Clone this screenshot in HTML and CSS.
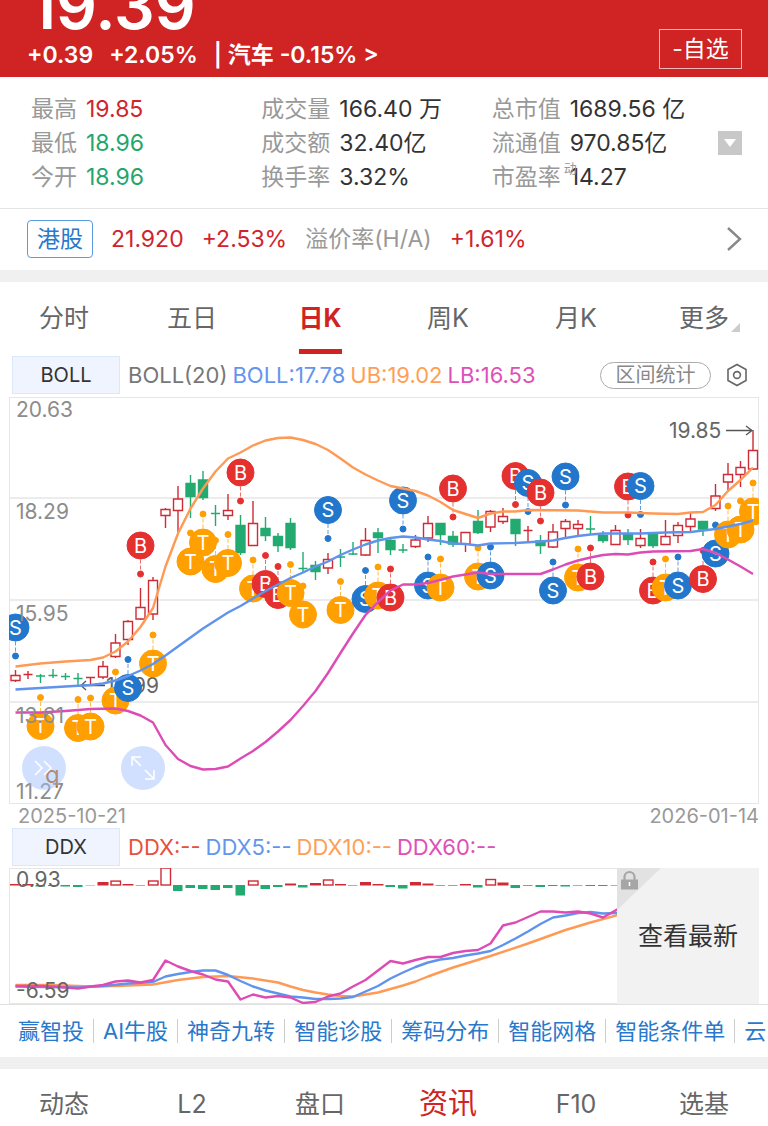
FILE: index.html
```html
<!DOCTYPE html>
<html lang="zh-CN">

<head>
    <meta charset="UTF-8">
    <meta name="viewport" content="width=device-width, initial-scale=1.0">
    <title>日K</title>
    <link rel="stylesheet" href="styles.css">
</head>

<body>
    <header class="header">
        <div>
            <div class="price">19.39</div>
            <div class="change">
                <span>+0.39</span>
                <span>+2.05%</span>
                <a href="#">| 汽车 -0.15% &gt;</a>
            </div>
        </div>
        <button class="watch">-自选</button>
    </header>

    <section class="quote">
        <div class="quote-grid">
            <div class="cell"><span>最高</span><b class="red">19.85</b></div>
            <div class="cell"><span>成交量</span><b>166.40 万</b></div>
            <div class="cell"><span>总市值</span><b>1689.56 亿</b></div>
            <div class="cell"><span>最低</span><b class="green">18.96</b></div>
            <div class="cell"><span>成交额</span><b>32.40亿</b></div>
            <div class="cell"><span>流通值</span><b>970.85亿</b></div>
            <div class="cell"><span>今开</span><b class="green">18.96</b></div>
            <div class="cell"><span>换手率</span><b>3.32%</b></div>
            <div class="cell"><span class="pe">市盈率<i>动</i></span><b>14.27</b></div>
        </div>
        <button class="expand" aria-label="展开">
            <svg width="12" height="8" viewBox="0 0 12 8"><path d="M0 0h12L6 8z" fill="#fff" /></svg>
        </button>
    </section>

    <a class="hk" href="#">
        <span class="hk-tag">港股</span>
        <span class="red">21.920</span>
        <span class="red">+2.53%</span>
        <span class="hk-label">溢价率(H/A)</span>
        <span class="red">+1.61%</span>
        <svg class="hk-arrow" width="16" height="26" viewBox="0 0 16 26"><path d="M2 2l12 11L2 24" fill="none" stroke="#888" stroke-width="2.4" /></svg>
    </a>

    <nav class="tabs">
        <button>分时</button>
        <button>五日</button>
        <button class="active">日K</button>
        <button>周K</button>
        <button>月K</button>
        <button class="more">更多</button>
    </nav>

    <div class="indicator">
        <button class="ind-name">BOLL</button>
        <div class="ind-values">
            <span>BOLL(20)</span>
            <span class="c-blue">BOLL:17.78</span>
            <span class="c-orange">UB:19.02</span>
            <span class="c-pink">LB:16.53</span>
        </div>
        <button class="range">区间统计</button>
        <button class="setting" aria-label="设置">
            <svg width="22" height="24" viewBox="0 0 22 24" fill="none" stroke="#666" stroke-width="1.6">
                <path d="M11 1.5L20 6.5v11L11 22.5L2 17.5v-11z" />
                <circle cx="11" cy="12" r="3.4" />
            </svg>
        </button>
    </div>

    <div class="chart">
        <svg id="kline" viewBox="9 397 750 407"></svg>
        <button class="tool" aria-label="快进">
            <svg width="22" height="22" viewBox="0 0 22 22"><path d="M2 4l7 7-7 7M11 4l7 7-7 7" /></svg>
        </button>
        <button class="tool full" aria-label="全屏">
            <svg width="26" height="26" viewBox="0 0 26 26"><path d="M2 11V2h9M2 2l9 9M24 15v9h-9M24 24l-9-9" /></svg>
        </button>
    </div>
    <div class="dates"><span>2025-10-21</span><span>2026-01-14</span></div>

    <div class="indicator">
        <button class="ind-name">DDX</button>
        <div class="ind-values">
            <span class="c-red">DDX:--</span>
            <span class="c-blue">DDX5:--</span>
            <span class="c-orange">DDX10:--</span>
            <span class="c-pink">DDX60:--</span>
        </div>
    </div>

    <div class="ddx">
        <svg id="ddx" viewBox="9 868 608 136"></svg>
        <button class="latest">
            <svg class="lock" width="44" height="42" viewBox="0 0 44 42">
                <path d="M0 0h44L0 42z" fill="#e2e2e2" />
                <path d="M7.500 12V9a5 5 0 0 1 10 0v3" fill="none" stroke="#a6a6a6" stroke-width="2.200" />
                <path d="M4 11.500h17v10H4z" fill="#a6a6a6" />
                <path d="M12.500 14v4" stroke="#fff" stroke-width="1.500" />
            </svg>
            查看最新
        </button>
    </div>

    <nav class="links">
        <a href="#">赢智投</a>
        <a href="#">AI牛股</a>
        <a href="#">神奇九转</a>
        <a href="#">智能诊股</a>
        <a href="#">筹码分布</a>
        <a href="#">智能网格</a>
        <a href="#">智能条件单</a>
        <a href="#">云</a>
    </nav>

    <nav class="bottom">
        <button>动态</button>
        <button>L2</button>
        <button>盘口</button>
        <button class="active">资讯</button>
        <button>F10</button>
        <button>选基</button>
    </nav>

    <script src="script.js"></script>
</body>

</html>
```

FILE: styles.css
```css
* {
    box-sizing: border-box;
}

body {
    margin: 0;
    background: #fff;
    color: #333;
    font-family: Inter, "Noto Sans CJK SC", sans-serif;
    font-size: 23px;
    line-height: 34px;
}

button {
    padding: 0;
    border: 0;
    background: none;
    color: inherit;
    font: inherit;
    cursor: pointer;
}

a {
    color: inherit;
    text-decoration: none;
}

svg {
    display: block;
}

.red {
    color: #d0242c;
}

.green {
    color: #22a66b;
}

.c-red {
    color: #e8503a;
}

.c-blue {
    color: #6495ed;
}

.c-orange {
    color: #ff9f55;
}

.c-pink {
    color: #e04fb8;
}

.header {
    display: flex;
    justify-content: space-between;
    align-items: flex-end;
    height: 77px;
    padding: 0 26px 6px 27px;
    overflow: hidden;
    background: #d02324;
    color: #fff;
}

.price {
    padding-left: 2px;
    font-size: 64px;
    font-weight: 600;
    line-height: 66px;
}

.change {
    display: flex;
    gap: 16px;
    font-weight: 600;
    line-height: 32px;
}

.watch {
    width: 83px;
    height: 40px;
    margin-bottom: 2px;
    border: 1px solid #f3b5b5;
}

.quote {
    display: flex;
    align-items: center;
    padding: 15px 26px 14px 31px;
    border-bottom: 1px solid #e4e4e4;
}

.quote-grid {
    display: grid;
    flex: 1;
    grid-template-columns: repeat(3, 1fr);
}

.cell {
    display: flex;
    gap: 9px;
    white-space: nowrap;
}

.cell span {
    color: #999;
}

.cell b {
    font-weight: 400;
}

.pe {
    position: relative;
}

.pe i {
    position: absolute;
    top: -9px;
    right: -16px;
    font-size: 13px;
    font-style: normal;
}

.expand {
    display: flex;
    align-items: center;
    justify-content: center;
    width: 24px;
    height: 24px;
    margin-left: -4px;
    background: #c8c8c8;
}

.hk {
    display: flex;
    align-items: center;
    gap: 18px;
    height: 73px;
    padding: 0 26px 2px 27px;
    border-bottom: 12px solid #f0f0f0;
}

.hk-tag {
    padding: 0 9px;
    border: 1px solid #5b9be0;
    border-radius: 4px;
    color: #2878cc;
    line-height: 36px;
}

.hk-label {
    color: #999;
}

.hk-arrow {
    margin-left: auto;
}

.tabs,
.bottom {
    display: grid;
    grid-template-columns: repeat(6, 1fr);
    color: #666;
    font-size: 25px;
}

.tabs button {
    position: relative;
    height: 74px;
    padding-bottom: 2px;
}

.tabs .active {
    color: #d02324;
    font-weight: 700;
}

.tabs .active::after {
    content: "";
    position: absolute;
    bottom: 2px;
    left: calc(50% - 21px);
    width: 43px;
    height: 5px;
    background: #d02324;
}

.more::after {
    content: "";
    position: absolute;
    right: 28px;
    bottom: 24px;
    border-bottom: 9px solid #ccc;
    border-left: 9px solid transparent;
}

.indicator {
    display: flex;
    align-items: center;
    height: 38px;
    padding: 0 20px 0 12px;
    font-size: 20px;
}

.ind-name {
    width: 108px;
    height: 38px;
    border: 1px solid #dbe7fb;
    background: #eff4fe;
}

.ind-values {
    display: flex;
    flex: 1;
    gap: 5px;
    margin-left: 8px;
    color: #777;
    font-size: 22px;
}

.range {
    width: 111px;
    height: 27px;
    border: 1px solid #aaa;
    border-radius: 14px;
    color: #888;
    line-height: 24px;
}

.setting {
    margin-left: 15px;
}

.chart {
    position: relative;
    margin: 3px 9px 0;
}

.chart > svg,
.ddx > svg {
    width: 100%;
}

.tool {
    position: absolute;
    bottom: 14px;
    left: 13px;
    display: flex;
    align-items: center;
    justify-content: center;
    width: 44px;
    height: 44px;
    border-radius: 50%;
    background: rgba(160, 191, 254, 0.48);
}

.tool path {
    fill: none;
    stroke: #fff;
    stroke-width: 1.5;
}

.full {
    left: 112px;
}

.dates {
    display: flex;
    justify-content: space-between;
    padding: 0 9px 0 18px;
    color: #999;
    font-size: 20px;
    line-height: 24px;
}

.ddx {
    display: grid;
    grid-template-columns: 608fr 142fr;
    margin: 2px 9px 0;
}

.latest {
    position: relative;
    background: #f2f2f2;
    font-size: 25px;
}

.lock {
    position: absolute;
    top: 0;
    left: 0;
}

.links {
    display: flex;
    align-items: center;
    height: 65px;
    padding: 0 9px;
    border-top: 1px solid #e0e0e0;
    border-bottom: 12px solid #f0f0f0;
    overflow: hidden;
    color: #2878cc;
    font-size: 22px;
    white-space: nowrap;
}

.links a {
    padding: 0 9px;
    line-height: 24px;
}

.links a + a {
    border-left: 1px solid #ccc;
}

.bottom {
    height: 57px;
    padding-top: 12px;
}

.bottom .active {
    color: #d02324;
    font-size: 29px;
}

/* chart */
.grid {
    stroke: #e6e6e6;
}

.up {
    fill: none;
    stroke: #cf2b36;
    stroke-width: 1.4;
}

.up.solid {
    fill: #cf2b36;
    stroke: none;
}

.down {
    fill: #22aa70;
    stroke: #22aa70;
    stroke-width: 1.4;
}

.down.solid {
    stroke: none;
}

.line {
    fill: none;
    stroke-width: 2.4;
    stroke-linejoin: round;
}

.ub {
    stroke: #ff9a55;
}

.mid {
    stroke: #5f93ec;
}

.lb {
    stroke: #dd4cb4;
}

.B {
    fill: #e53030;
    stroke: #e53030;
}

.S {
    fill: #2277cc;
    stroke: #2277cc;
}

.T {
    fill: #ff9f00;
    stroke: #ff9f00;
}

.stem {
    stroke-dasharray: 4 2;
    opacity: 0.7;
}

.letter {
    fill: #fff;
    font-size: 20px;
    text-anchor: middle;
}

.axis {
    fill: #8c8c8c;
    font-size: 21px;
}

.axis.dark {
    fill: #666;
}

.arrow {
    fill: none;
    stroke: #555;
    stroke-width: 1.3;
}

.q {
    fill: #b86200;
    font-size: 24px;
}
```

FILE: script.js
```js
const STEP = 12.5;
const px = (i) => 15.5 + i * STEP;

// direction, high, body top, body bottom, low
const candles = [
    ['u', 670, 675.5, 680.5, 682], ['u', 671, 674.5, 674.5, 679], ['d', 674, 676, 676, 683], ['d', 669, 675.5, 675.5, 678],
    ['d', 673, 676.5, 676.5, 680], ['d', 673, 678.5, 678.5, 685], ['u', 677, 677.5, 677.5, 684], ['u', 661, 666.5, 677, 679],
    ['u', 634, 643, 656.5, 658], ['u', 620, 621.5, 639.5, 645], ['u', 588, 607.5, 619, 620], ['u', 577, 580.5, 614, 620],
    ['u', 508, 509.5, 515.5, 528], ['u', 486, 499, 510.5, 532], ['d', 475, 483.5, 496.5, 518], ['d', 471, 480, 497.5, 500],
    ['d', 505, 513.5, 513.5, 526], ['u', 494, 510.5, 515.5, 520], ['d', 515, 525.5, 552.5, 555], ['u', 501, 523.5, 545.5, 546],
    ['d', 517, 528.5, 535.5, 541], ['d', 533, 536.5, 545.5, 552], ['d', 518, 523.5, 547.5, 550], ['d', 552, 568.5, 568.5, 573],
    ['d', 561, 565.5, 571.5, 580], ['u', 553, 559.5, 568, 574], ['d', 549, 557, 557, 567], ['d', 542, 554, 554, 555],
    ['u', 528, 540.5, 555, 556], ['d', 528, 533, 537.5, 553], ['d', 538, 540.5, 549.5, 555], ['d', 544, 550, 550, 553],
    ['u', 535, 540, 546.5, 548], ['u', 516, 523.5, 538, 542], ['d', 523, 523.5, 534.5, 545], ['d', 531, 536.5, 544, 547],
    ['u', 532, 532.5, 544, 552], ['d', 510, 521.5, 532.5, 534], ['u', 510, 511.5, 527, 532], ['u', 508, 516.5, 521.5, 524],
    ['d', 519, 519.5, 533.5, 546], ['u', 526, 530.5, 530.5, 542], ['d', 535, 541, 545.5, 554], ['u', 524, 532, 547, 548],
    ['u', 519, 521.5, 528.5, 537], ['u', 520, 524.5, 528.5, 536], ['d', 516, 529, 529, 534], ['d', 531, 535.5, 540.5, 543],
    ['u', 525, 530.5, 544.5, 545], ['d', 529, 534.5, 539.5, 545], ['u', 529, 538.5, 545.5, 548], ['d', 533, 533.5, 545.5, 548],
    ['u', 520, 536.5, 544.5, 545], ['u', 522, 525.5, 535.5, 543], ['u', 513, 519, 526.5, 531], ['d', 521, 521.5, 529, 536],
    ['u', 484, 496, 508.5, 511], ['u', 463, 474.5, 482, 491], ['u', 461, 467.5, 474.5, 487], ['u', 430, 450.5, 469, 470]
];

// index, y pairs
const ub = [0, 666.5, 2, 663.5, 4, 661.5, 6, 660, 7, 657.5, 8, 651.5, 9, 641.5, 10, 627, 11, 608, 12, 566.5, 13, 533.5, 14, 508.5,
    15, 488.5, 16, 471.5, 17, 458.5, 18, 452.5, 19, 445.5, 20, 440.5, 21, 438, 22, 437.5, 23, 440, 24, 444, 25, 450, 26, 458.5,
    27, 467.5, 28, 474.5, 29, 480.5, 30, 486, 31, 488.5, 32, 491, 33, 495.5, 34, 502, 35, 510, 36, 514, 37, 518, 38, 513.5,
    39, 511.5, 40, 511.5, 41, 510, 45, 510.5, 47, 512.5, 49, 512.5, 51, 513.5, 53, 514, 54, 512.5, 55, 512, 56, 505, 57, 491,
    58, 480, 59, 467.5];
const mid = [0, 689.5, 2, 688, 4, 686.5, 6, 685, 7, 683.5, 8, 680.5, 9, 676, 10, 670.5, 11, 664, 12, 655.5, 13, 646.5, 14, 637.5,
    15, 628.5, 16, 620.5, 17, 612.5, 18, 606, 19, 598.5, 20, 591, 21, 584.5, 22, 578, 23, 572.5, 24, 566.5, 25, 561.5, 26, 555,
    27, 549.5, 28, 544.5, 29, 540.5, 30, 538, 31, 536.5, 32, 537.5, 33, 539.5, 34, 541, 35, 543.5, 36, 544, 37, 545.5, 38, 543.5,
    40, 543, 42, 541.5, 43, 540.5, 44, 538, 45, 536, 46, 534.5, 47, 533.5, 50, 533.5, 52, 532.5, 54, 532, 55, 530.5, 56, 529,
    57, 526.5, 58, 524, 59, 520.5];
const lb = [0, 712.5, 2, 712.5, 4, 711, 6, 709, 8, 708.5, 9, 711, 10, 715.5, 11, 722.5, 12, 745, 13, 759, 14, 766, 15, 769.5,
    16, 769, 17, 766.5, 18, 758.5, 19, 751, 20, 742, 21, 731.5, 22, 720, 23, 706, 24, 691, 25, 673, 26, 653, 27, 633.5, 28, 615,
    29, 602, 30, 590.5, 31, 584.5, 32, 584.5, 33, 583, 34, 580, 35, 576.5, 36, 574.5, 37, 572.5, 38, 574, 42, 574, 43, 569.5,
    44, 564.5, 45, 560.5, 46, 557.5, 47, 555, 48, 554, 49, 554.5, 50, 552.5, 51, 551.5, 54, 551, 55, 549, 56, 553, 57, 559.5,
    58, 566.5, 59, 574];

// letter, index, centre of the badge, side the dot is on (1 = below)
const marks = [
    ['S', 0, 627.5, 1], ['T', 2, 726, -1], ['T', 5, 728, -1], ['T', 6, 726.5, -1], ['T', 8, 700.5, -1], ['S', 9, 688, -1],
    ['B', 10, 545.5, 1], ['T', 11, 663.5, -1], ['T', 14, 561.5, -1], ['T', 16, 569, -1], ['T', 15, 542.5, -1], ['T', 17, 563, -1],
    ['B', 18, 472.5, 1], ['T', 19, 588.5, -1], ['B', 20, 584, -1], ['B', 21, 595, -1], ['T', 22, 593, -1], ['T', 23, 614.5, -1],
    ['S', 25, 510, 1], ['T', 26, 610, -1], ['S', 28, 599, -1], ['T', 29, 595.5, -1], ['B', 30, 597.5, -1], ['S', 31, 500.5, 1],
    ['S', 33, 585.5, -1], ['T', 34, 587.5, -1], ['B', 35, 488.5, 1], ['T', 37, 576.5, -1], ['S', 38, 575.5, -1], ['B', 40, 476, 1],
    ['S', 41, 483, 1], ['B', 42, 492.5, 1], ['S', 43, 590.5, -1], ['S', 44, 476.5, 1], ['T', 45, 577.5, -1], ['B', 46, 576.5, -1],
    ['B', 49, 486.5, 1], ['S', 50, 486, 1], ['B', 51, 590.5, -1], ['T', 52, 587.5, -1], ['S', 53, 585.5, -1], ['B', 55, 579, -1],
    ['S', 56, 553.5, -1], ['T', 57, 534.5, -1], ['T', 58, 529.5, -1], ['T', 59, 511.5, -1]
];

function path(data, cls) {
    let points = [];
    for (let k = 0; k < data.length; k += 2) {
        points.push(px(data[k]) + ',' + data[k + 1]);
    }
    return `<polyline class="line ${cls}" points="${points.join(' ')}"/>`;
}

function label(x, y, text, cls = '') {
    return `<text class="axis ${cls}" x="${x}" y="${y}">${text}</text>`;
}

function drawKline() {
    let out = '<rect class="grid" x="9.5" y="397.5" width="749" height="406" fill="none"/>';
    [498, 600, 702].forEach((y) => {
        out += `<path class="grid" d="M9 ${y}h750" stroke-width="1.5"/>`;
    });
    candles.forEach(([dir, high, top, bottom, low], i) => {
        let x = px(i);
        let cls = dir === 'u' ? 'up' : 'down';
        if (top === bottom) {
            out += `<path class="${cls}" d="M${x} ${high}V${low}M${x - 4.5} ${top}h9"/>`;
        } else {
            out += `<path class="${cls}" d="M${x} ${high}V${top}M${x} ${bottom}V${low}M${x - 4.5} ${top}h9V${bottom}h-9z"/>`;
        }
    });
    out += label(106, 693, '13.99', 'dark') + '<path class="arrow" d="M105 685.5H81M86 681l-5 4.500 5 4.500"/>';
    marks.forEach(([type, i, y, side]) => {
        let x = px(i);
        out += `<g class="${type}"><path class="stem" d="M${x} ${y + side * 14}v${side * 12}"/>`
            + `<circle cx="${x}" cy="${y + side * 28.5}" r="3"/><circle cx="${x}" cy="${y}" r="13.5"/></g>`
            + `<text class="letter" x="${x}" y="${y + 7}">${type}</text>`;
    });
    out += path(ub, 'ub') + path(mid, 'mid') + path(lb, 'lb');
    out += label(16, 417, '20.63') + label(16, 519, '18.29') + label(16, 621, '15.95') + label(16, 723, '13.61') + label(16, 799, '11.27');
    out += label(669, 438, '19.85', 'dark') + '<path class="arrow" d="M726 430.5h26M746 426l6 4.500-6 4.500"/>';
    out += '<text class="q" x="45" y="783">q</text>';
    document.getElementById('kline').innerHTML = out;
}

// bar heights, positive is inflow
const bars = [1.5, 1.5, -1.5, -1, -1.5, -2, -0.4, 3.5, 3.9, 1.5, -0.6, 4, 17, -6, -3, -4, -5, -3, -10.5, 4, -4, -2, 2, -2.5, 2.5,
    5, 1.5, -0.6, 3.5, 1.5, -2, -3.5, 3.5, 2, -0.7, -0.7, 1.5, -2.5, 5.5, 3, -3, -0.8, -2, -1, -1.5, -0.6, -1, -1, -0.6];
const ddx10 = [0, 985, 3, 985, 6, 986.5, 8, 986, 11, 984.5, 13, 980, 15, 977, 17, 976, 19, 978.5, 21, 982.5, 22, 986.5, 23, 990,
    24, 992.5, 25, 994.5, 26, 996, 27, 996.5, 28, 994.5, 29, 992.5, 30, 989, 31, 985.5, 32, 981.5, 33, 976.5, 35, 967.5,
    38, 956, 41, 943.5, 44, 930, 46, 922.5, 48.2, 915];
const ddx5 = [0, 986.5, 5, 987.5, 7, 986, 9, 983.5, 11, 982, 12, 976.5, 13, 974, 14, 972, 15, 970.5, 16, 970.5, 17, 975, 18, 981,
    19, 986.5, 20, 990.5, 21, 993.5, 22, 996.5, 23, 997.5, 24, 999, 25, 999, 26, 998.5, 27, 997, 28, 991.5, 29, 986, 30, 978.5,
    31, 972.5, 32, 967, 33, 962.5, 34, 959.5, 35, 958, 36, 955.5, 37, 953.5, 38, 951, 39, 945, 40, 938.5, 41, 931.5, 42, 924,
    43, 917.5, 44, 915.5, 45, 913, 46, 912, 47, 913.5, 48.2, 913];
const ddx60 = [0, 986, 2, 986, 3, 986.5, 4, 987.5, 5, 988.5, 6, 986.5, 7, 985, 8, 981.5, 9, 980.5, 10, 982.5, 11, 980, 12, 960.5,
    13, 966.5, 14, 971, 15, 974.5, 16, 979.5, 17, 981.5, 18, 999.5, 19, 994.5, 20, 997.5, 21, 996, 22, 997.5, 23, 1003, 24, 1002,
    25, 996.5, 26, 993.5, 27, 986.5, 28, 980, 29, 970.5, 30, 961, 31, 963.5, 32, 960, 33, 957, 34, 957, 35, 953, 36, 951,
    37, 950, 38, 943.5, 39, 925.5, 40, 922.5, 41, 917, 42, 911.5, 43, 911.5, 44, 912.5, 45, 911.5, 46, 913.5, 47, 917.5, 48.2, 909];

function drawDdx() {
    let out = '<rect class="grid" x="9.5" y="868.5" width="620" height="135" fill="none"/>';
    bars.forEach((h, i) => {
        let x = px(i) - 5;
        if (h > 3.5) {
            out += `<rect class="up" x="${x + 0.5}" y="${885 - h}" width="9.500" height="${h}"/>`;
        } else if (h > 0) {
            out += `<rect class="up solid" x="${x - 0.5}" y="${885.5 - h}" width="11" height="${h}"/>`;
        } else {
            out += `<rect class="down solid" x="${x}" y="885" width="9.500" height="${-h}"/>`;
        }
    });
    out += path(ddx10, 'ub') + path(ddx5, 'mid') + path(ddx60, 'lb');
    out += label(16, 887, '0.93', 'dark') + label(16, 998, '-6.59', 'dark');
    document.getElementById('ddx').innerHTML = out;
}

drawKline();
drawDdx();
```
